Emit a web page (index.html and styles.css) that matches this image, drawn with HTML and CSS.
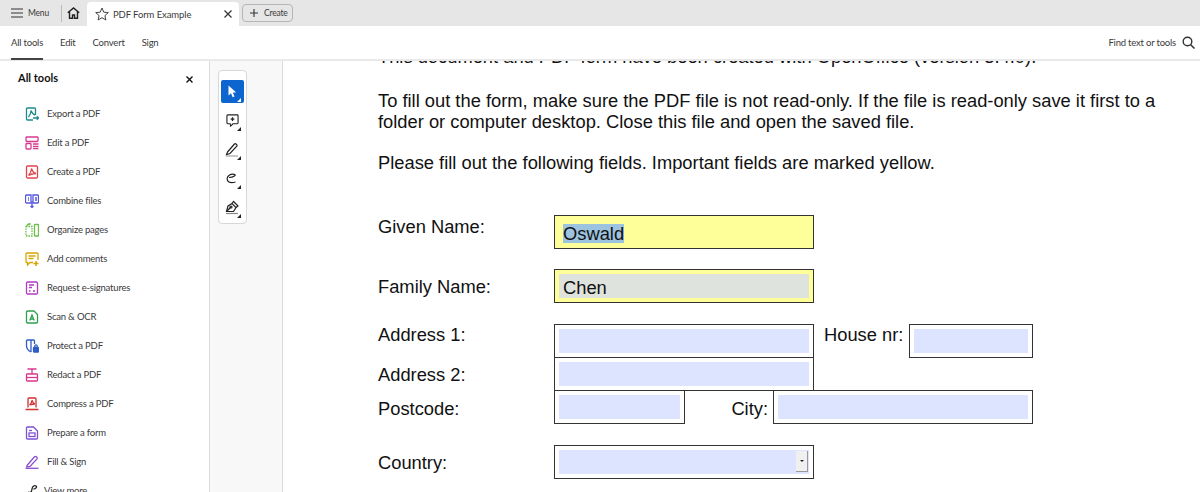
FILE: index.html
```html
<!DOCTYPE html>
<html lang="en">
<head>
  <meta charset="UTF-8">
  <title>PDF Form Example</title>
  <link rel="stylesheet" href="styles.css">
</head>
<body>

<div class="tabbar">
  <div class="menu">
    <svg width="12" height="10" viewBox="0 0 12 10"><path d="M0 1h12M0 5h12M0 9h12" stroke="#333" stroke-width="1.200" fill="none"/></svg>
    <span>Menu</span>
  </div>
  <div class="tab-sep"></div>
  <svg class="home" width="13" height="12" viewBox="0 0 13 12"><path d="M.8 5.800L6.500 1l5.700 4.800M2.500 4.800v6.500h3V8h2v3.300h3V4.800" stroke="#222" stroke-width="1.400" fill="none"/></svg>
  <div class="tab">
    <svg width="14" height="14" viewBox="0 0 14 14"><path d="M7 1l1.800 4.200 4.500.4-3.400 3 1 4.400L7 10.700 3.100 13l1-4.400-3.400-3 4.500-.4z" stroke="#444" stroke-width="1" fill="none"/></svg>
    <span class="tab-title">PDF Form Example</span>
    <svg class="tab-close" width="8" height="8" viewBox="0 0 8 8"><path d="M.5.5l7 7M7.500.5l-7 7" stroke="#333" stroke-width="1.200"/></svg>
  </div>
  <div class="create">
    <svg width="8" height="8" viewBox="0 0 8 8"><path d="M4 0v8M0 4h8" stroke="#333" stroke-width="1.100"/></svg>
    <span>Create</span>
  </div>
</div>

<div class="navbar">
  <a class="nav-item active">All tools</a>
  <a class="nav-item">Edit</a>
  <a class="nav-item">Convert</a>
  <a class="nav-item">Sign</a>
  <div class="find">
    <span>Find text or tools</span>
    <svg width="13" height="13" viewBox="0 0 13 13"><circle cx="5.500" cy="5.500" r="4.300" stroke="#333" stroke-width="1.400" fill="none"/><path d="M8.700 8.700L12.500 12.500" stroke="#333" stroke-width="1.500"/></svg>
  </div>
</div>

<div class="main">
  <aside class="sidebar">
    <div class="side-head">
      <b>All tools</b>
      <svg width="7" height="7" viewBox="0 0 7 7"><path d="M.5.5l6 6M6.500.5l-6 6" stroke="#111" stroke-width="1.400"/></svg>
    </div>
    <ul class="tools">
      <li><svg viewBox="0 0 14 14" fill="none" stroke="#1f8a8a" stroke-width="1.300"><path d="M8 13H2.500a1 1 0 0 1-1-1V2a1 1 0 0 1 1-1h7a1 1 0 0 1 1 1v6"/><path d="M3.500 10C5 8 6 5 6 3.500 7 6 8 7.500 10 8"/><path d="M8 11h5.500M11.800 9.300l1.900 1.700-1.900 1.700"/></svg>Export a PDF</li>
      <li><svg viewBox="0 0 14 14" fill="none" stroke="#d83790" stroke-width="1.300"><rect x="1" y="1" width="12" height="4.500" rx=".8"/><rect x="1" y="7.500" width="5" height="5.500" rx=".8"/><path d="M8 8h5.500M8 10.300h5.500M8 12.500h5.500"/></svg>Edit a PDF</li>
      <li><svg viewBox="0 0 14 14" fill="none" stroke="#e0454b" stroke-width="1.300"><rect x="1.500" y="1" width="11" height="12" rx="1.200"/><path d="M3.500 10.500C5 9 6.500 6 6.500 3.500 7.500 6.500 8.500 8 11 8.500 8.500 8.500 6 9 3.500 10.500z"/></svg>Create a PDF</li>
      <li><svg viewBox="0 0 14 14" fill="none" stroke="#5558e0" stroke-width="1.300"><path d="M6 9H1.500a1 1 0 0 1-1-1V2a1 1 0 0 1 1-1H6zM8 9h4.500a1 1 0 0 0 1-1V2a1 1 0 0 0-1-1H8z"/><path d="M7 7v6.500M5.500 12L7 13.500 8.500 12M3 4h1M10 4h2M3 6h1M10 6h2"/></svg>Combine files</li>
      <li><svg viewBox="0 0 14 14" fill="none" stroke="#6cbf4a" stroke-width="1.300"><path d="M1 3.500h6V13H1z" stroke-dasharray="1.500 1"/><rect x="9.500" y="1.500" width="4" height="11.500" rx=".6"/><path d="M2 3c0-1.500 1-2 3-2M3.500.2L5 1 3.500 2"/></svg>Organize pages</li>
      <li><svg viewBox="0 0 14 14" fill="none" stroke="#d9a400" stroke-width="1.300"><path d="M8 10.500H5L2.500 13v-2.500h-.5a1 1 0 0 1-1-1V2a1 1 0 0 1 1-1h10a1 1 0 0 1 1 1v6"/><path d="M3.500 4h7M3.500 6.500h5"/><path d="M11 9v5M8.500 11.500h5" stroke-width="1.500"/></svg>Add comments</li>
      <li><svg viewBox="0 0 14 14" fill="none" stroke="#b03cc4" stroke-width="1.300"><rect x="1.500" y="1" width="11" height="12" rx="1.200"/><path d="M4 4h5M4 6.500h3M4 10h1.500M8 10h2" stroke-width="1.500"/></svg>Request e-signatures</li>
      <li><svg viewBox="0 0 14 14" fill="none" stroke="#2e9e4f" stroke-width="1.300"><path d="M9 1H2.500a1 1 0 0 0-1 1v10a1 1 0 0 0 1 1h9a1 1 0 0 0 1-1V4.500z"/><path d="M4.800 10.500L7 5l2.200 5.500M5.500 9h3"/></svg>Scan &amp; OCR</li>
      <li><svg viewBox="0 0 14 14" fill="none" stroke="#2f5fc4" stroke-width="1.300"><path d="M6 1H2.500a1 1 0 0 0-1 1v4.500c0 3 1.500 5 4.500 6.500M6 1h2.500a1 1 0 0 1 1 1v3"/><path d="M6 1v12"/><rect x="8.500" y="8.500" width="5" height="4.500" rx=".5" fill="#2f5fc4"/><path d="M9.800 8.500V7a1.200 1.200 0 0 1 2.400 0v1.500"/></svg>Protect a PDF</li>
      <li><svg viewBox="0 0 14 14" fill="none" stroke="#d83790" stroke-width="1.300"><path d="M2.500 1h9M7 1v5"/><rect x="1.500" y="6" width="11" height="7" rx=".8"/><path d="M1.500 9.500h11"/></svg>Redact a PDF</li>
      <li><svg viewBox="0 0 14 14" fill="none" stroke="#d32f2f" stroke-width="1.300"><path d="M3 10.500V2a1 1 0 0 1 1-1h6a1 1 0 0 1 1 1v8.500"/><path d="M4.500 8C6 7 6.800 5 7 3.200 7.500 5 8.200 6.500 9.800 7 8 7 6 7.500 4.500 8z"/><path d="M.5 12.500h13" stroke-width="1.500"/></svg>Compress a PDF</li>
      <li><svg viewBox="0 0 14 14" fill="none" stroke="#7d52d6" stroke-width="1.300"><path d="M8.500 1H2.500a1 1 0 0 0-1 1v10a1 1 0 0 0 1 1h9a1 1 0 0 0 1-1V5z"/><rect x="4" y="7" width="6" height="3.500"/><path d="M4 4.500h3"/></svg>Prepare a form</li>
      <li><svg viewBox="0 0 14 14" fill="none" stroke="#8a4fd0" stroke-width="1.300"><path d="M2 10.500L9.500 1.800c1-.9 3.300.4 2.700 1.800L5 11.500 1.800 12z"/><path d="M.5 13.300h13"/></svg>Fill &amp; Sign</li>
      <li class="more"><svg viewBox="0 0 14 14" fill="none" stroke="#222" stroke-width="1.300"><path d="M2 8c3 1 3.500 0 4-3s2.500-4 4-3-.5 3-2.500 3"/></svg>View more</li>
    </ul>
  </aside>

  <div class="rail">
    <div class="toolbox">
      <div class="grip"></div>
      <div class="tbtn on">
        <svg width="11" height="13" viewBox="0 0 11 13"><path d="M1.500.5v10l2.500-2.300 1.700 4 1.800-.8-1.700-3.800h3.400z" fill="#fff"/></svg>
      </div>
      <div class="tbtn">
        <svg width="13" height="13" viewBox="0 0 14 14" fill="none" stroke="#222" stroke-width="1.200"><path d="M4.500 10.500H2a1 1 0 0 1-1-1V2a1 1 0 0 1 1-1h10a1 1 0 0 1 1 1v7.500a1 1 0 0 1-1 1H7.500L5 13z"/><path d="M7 3.500v4M5 5.500h4" stroke-width="1.400"/></svg>
      </div>
      <div class="tbtn">
        <svg width="15" height="15" viewBox="0 0 15 15" fill="none" stroke="#222" stroke-width="1.200"><path d="M2.500 10l7-8c.8-.9 3.200.8 2.500 2l-7 7.500-3.500 1z"/><path d="M1 14h12" stroke="#aaa" stroke-width="1.300"/></svg>
      </div>
      <div class="tbtn">
        <svg width="14" height="11" viewBox="0 0 14 11" fill="none" stroke="#222" stroke-width="1.200"><path d="M3 4.500C5 4.500 7 4 8.500 3 11 1.500 6.500.3 3.500 2 .5 4 .3 7.500 3 9c1.500.8 4 .6 6.500 0"/></svg>
      </div>
      <div class="tbtn">
        <svg width="15" height="15" viewBox="0 0 15 15" fill="none" stroke="#222" stroke-width="1.200"><path d="M1.500 11.500L3 6l4-2.500 4 4L8.500 11.500z"/><path d="M7 3.500L8.500 1.500l4.500 4.500-2 1.500"/><path d="M1.500 11.500L5.500 7.500"/><circle cx="6" cy="7" r="1"/><path d="M1 13.500h12" stroke="#888"/></svg>
      </div>
    </div>
  </div>

  <main class="doc">
    <p class="clipped">This document and PDF form have been created with OpenOffice (version 3.4.0).</p>
    <p class="para">To fill out the form, make sure the PDF file is not read-only. If the file is read-only save it first to a<br>folder or computer desktop. Close this file and open the saved file.</p>
    <p class="para second">Please fill out the following fields. Important fields are marked yellow.</p>

    <div class="row r-given">
      <label>Given Name:</label>
      <div class="field wide yellow-plain"><span class="sel">Oswald</span></div>
    </div>
    <div class="row r-family">
      <label>Family Name:</label>
      <div class="field wide yellow"><div class="fill grey">Chen</div></div>
    </div>
    <div class="row r-addr1">
      <label>Address 1:</label>
      <div class="field wide"><div class="fill"></div></div>
      <span class="side-label house">House nr:</span>
      <div class="field house-f"><div class="fill"></div></div>
    </div>
    <div class="row r-addr2">
      <label>Address 2:</label>
      <div class="field wide"><div class="fill"></div></div>
    </div>
    <div class="row r-post">
      <label>Postcode:</label>
      <div class="field post"><div class="fill"></div></div>
      <span class="side-label city">City:</span>
      <div class="field city-f"><div class="fill"></div></div>
    </div>
    <div class="row r-country">
      <label>Country:</label>
      <div class="field wide"><div class="fill"><span class="drop"><i></i></span></div></div>
    </div>
  </main>
</div>

</body>
</html>
```

FILE: styles.css
```css
* {
  box-sizing: border-box;
}

html, body {
  margin: 0;
  height: 492px;
  overflow: hidden;
  background: #fff;
}

body {
  font-family: "Lato", "Noto Sans", sans-serif;
  font-size: 9.500px;
  letter-spacing: -0.2px;
  color: #3a3a3a;
}

.tabbar {
  display: flex;
  align-items: center;
  height: 26px;
  background: #e6e6e6;
  font-size: 8.500px;
}

.menu {
  display: flex;
  align-items: center;
  gap: 5px;
  width: 61px;
  padding-left: 11px;
}

.tab-sep {
  width: 1px;
  height: 17px;
  background: #bbb;
}

.home {
  margin: 0 7px 0 5px;
}

.tab {
  display: flex;
  align-items: center;
  align-self: flex-end;
  width: 152px;
  height: 24px;
  padding: 0 8px;
  background: #fff;
  border-radius: 4px 4px 0 0;
}

.tab-title {
  margin-left: 4px;
  font-size: 9.500px;
  letter-spacing: -0.1px;
}

.tab-close {
  margin-left: auto;
  margin-right: -1px;
}

.create {
  display: flex;
  align-items: center;
  gap: 6px;
  width: 51px;
  height: 18px;
  margin-left: 3px;
  padding-left: 7px;
  border: 1px solid #b5b5b5;
  border-radius: 4px;
}

.navbar {
  display: flex;
  align-items: center;
  height: 35px;
  padding: 0 5px 0 11px;
  border-bottom: 2px solid #e9e9e9;
}

.nav-item {
  position: relative;
  margin-right: 17px;
}

.nav-item.active::after {
  content: "";
  position: absolute;
  left: 0;
  right: 0;
  top: 21px;
  height: 2px;
  background: #444;
}

.find {
  display: flex;
  align-items: center;
  gap: 6px;
  margin-left: auto;
}

.main {
  display: flex;
  height: 431px;
}

.sidebar {
  width: 210px;
  overflow: hidden;
  border-right: 1px solid #dcdcdc;
}

.side-head {
  display: flex;
  align-items: center;
  justify-content: space-between;
  height: 33px;
  padding: 0 16px 0 18px;
  color: #111;
  font-size: 11px;
  letter-spacing: 0;
}

.side-head svg {
  margin-top: 4px;
}

.tools {
  margin: 0;
  padding: 5px 0 0 25px;
  list-style: none;
}

.tools li {
  display: flex;
  align-items: center;
  gap: 8px;
  height: 29px;
}

.tools li svg {
  width: 14px;
  height: 14px;
  flex: none;
}

.tools .more {
  margin-left: 1px;
  gap: 4px;
}

.rail {
  width: 73px;
  padding: 9px 0 0 8px;
  background: #f8f8f8;
  border-right: 1px solid #dcdcdc;
}

.toolbox {
  display: flex;
  flex-direction: column;
  align-items: center;
  width: 29px;
  height: 154px;
  padding: 2px;
  background: #fff;
  border: 1px solid #d8d8d8;
  border-radius: 4px;
}

.grip {
  width: 23px;
  height: 3px;
  margin-bottom: 7px;
  background: #b5b5b5;
}

.tbtn {
  position: relative;
  display: flex;
  align-items: center;
  justify-content: center;
  flex: none;
  width: 23px;
  height: 23px;
  margin-bottom: 6px;
}

.tbtn::after {
  content: "";
  position: absolute;
  right: 3px;
  bottom: 1px;
  border-style: solid;
  border-width: 0 0 4px 4px;
  border-color: transparent transparent #222 transparent;
}

.tbtn.on {
  background: #0d66d0;
  border-radius: 2px;
}

.tbtn.on::after {
  border-bottom-color: #fff;
}

.doc {
  flex: 1;
  overflow: hidden;
  padding-left: 95px;
  color: #111;
  font-family: "Liberation Sans", Arial, sans-serif;
  font-size: 18.320px;
  letter-spacing: 0;
  line-height: 21px;
}

.doc p {
  margin: 0;
  white-space: nowrap;
}

.doc .clipped {
  margin-top: -15px;
}

.doc .para {
  margin-top: 23px;
}

.doc .para.second {
  margin-top: 20px;
}

.row {
  display: flex;
  align-items: flex-start;
}

.row label {
  width: 176px;
  flex: none;
}

.r-given {
  margin-top: 42px;
  height: 54px;
}

.r-given label {
  margin-top: 1px;
}

.r-family {
  height: 55px;
}

.r-family label {
  margin-top: 7px;
}

.r-addr1 {
  height: 33px;
}

.r-addr2 {
  height: 33px;
}

.r-addr2 label {
  margin-top: 7px;
}

.r-post {
  height: 55px;
}

.r-post label {
  margin-top: 8px;
}

.r-country label {
  margin-top: 7px;
}

.field {
  height: 34px;
  padding: 4px;
  border: 1px solid #333;
  background: #fff;
  flex: none;
}

.wide {
  width: 260px;
}

.post {
  width: 131px;
}

.house-f {
  width: 124px;
}

.city-f {
  width: 260px;
}

.fill {
  position: relative;
  height: 24px;
  padding-left: 4px;
  background: #dde4ff;
  line-height: 27px;
}

.fill.grey {
  background: #dfe3de;
}

.yellow, .yellow-plain {
  background: #ffff99;
}

.yellow-plain {
  padding: 8px 8px;
  line-height: 19px;
}

.sel {
  display: block;
  width: 61px;
  height: 19px;
  background: #9cc3e0;
  line-height: 19px;
}

.side-label {
  flex: none;
}

.house {
  width: 95px;
  padding-left: 10px;
}

.city {
  width: 88px;
  text-align: right;
  padding: 8px 5px 0 0;
}

.drop {
  position: absolute;
  right: 1px;
  top: 1px;
  display: flex;
  align-items: center;
  justify-content: center;
  width: 12px;
  height: 21px;
  background: #f0f0f0;
  border-right: 1px solid #999;
  border-bottom: 1px solid #999;
}

.drop i {
  border-style: solid;
  border-width: 2px 2px 0;
  border-color: #222 transparent transparent;
}
```
